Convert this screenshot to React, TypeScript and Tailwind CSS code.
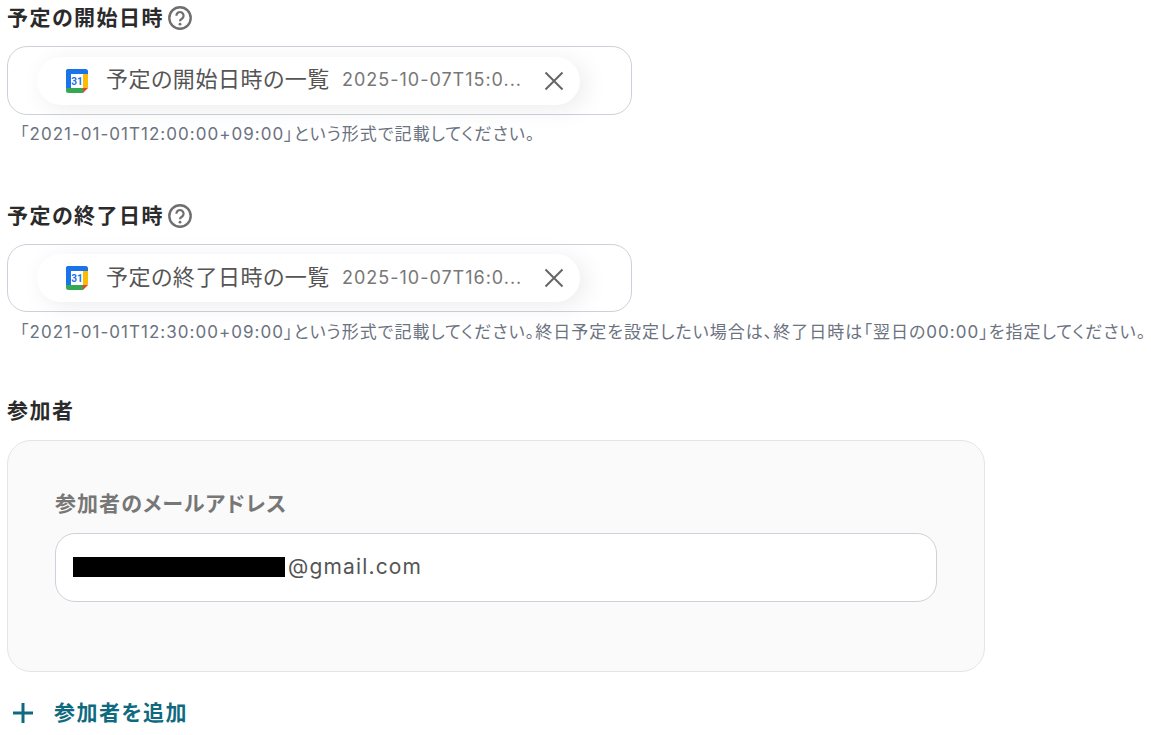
const font = "font-['Inter','Noto_Sans_CJK_JP',sans-serif] [font-feature-settings:'palt']";

const CalendarIcon = () => (
  <svg width="24" height="26" viewBox="0 0 24 26" className="shrink-0">
    <path d="M6 6h12v14H6z" fill="#fff" />
    <path d="M1 3.500A2.500 2.500 0 0 1 3.500 1H6v19H1z" fill="#1a73e8" />
    <path d="M3.500 1H20.500A2.500 2.500 0 0 1 23 3.500V6H1V3.500A2.500 2.500 0 0 1 3.500 1z" fill="#1a73e8" />
    <path d="M18 6h5v14h-5z" fill="#fbbc04" />
    <path d="M1 20h17v5H3.500A2.500 2.500 0 0 1 1 22.500z" fill="#34a853" />
    <path d="M18 20h5l-5 5z" fill="#ea4335" />
    <text x="12" y="16.500" textAnchor="middle" fontSize="10" fontWeight="700" fill="#1a73e8" fontFamily="Roboto, sans-serif">31</text>
  </svg>
);

const HelpIcon = () => (
  <svg width="24" height="24" viewBox="0 0 24 24" className="shrink-0" fill="none">
    <circle cx="12" cy="12" r="10.700" stroke="#6f6f6f" strokeWidth="2.400" />
    <path d="M8.400 9.700a3.600 3.600 0 1 1 5.500 3c-1.300.8-1.900 1.200-1.900 2.500" stroke="#6f6f6f" strokeWidth="2.200" />
    <circle cx="12" cy="18.200" r="1.400" fill="#6f6f6f" />
  </svg>
);

const Label = ({ text }: { text: string }) => (
  <div className="flex items-center gap-[4px] h-[24px]">
    <span className="pb-[2px] text-[21px] leading-none font-semibold tracking-[0.07em] text-[#2b2b2b]">{text}</span>
    <HelpIcon />
  </div>
);

const ChipField = ({ name, value, height }: { name: string; value: string; height: string }) => (
  <div className={`w-[625px] ${height} border border-[#ccd2da] rounded-[20px] flex items-center pl-[29px] bg-white`}>
    <div className="w-[543px] h-[48px] rounded-full bg-white shadow-[6px_4px_24px_rgba(0,0,0,0.08)] flex items-center pl-[28px]">
      <CalendarIcon />
      <span className="ml-[17px] pb-[2px] w-[222px] text-[22px] tracking-[0.025em] text-[#555555] whitespace-nowrap">{name}</span>
      <span className="ml-[14px] pb-[2px] w-[180px] text-[18px] tracking-[0.055em] text-[#777777] whitespace-nowrap">{value}</span>
      <svg width="22" height="22" viewBox="0 0 22 22" className="ml-[21px]" fill="none">
        <path d="M2.500 2.500l17 17M19.500 2.500l-17 17" stroke="#666666" strokeWidth="2" />
      </svg>
    </div>
  </div>
);

const Hint = ({ text }: { text: string }) => (
  <p className="mt-[9px] ml-[13px] text-[17px] leading-[20px] tracking-[0.06em] text-[#6b7280] whitespace-nowrap">{text}</p>
);

export default function App() {
  return (
    <div className={`${font} w-[1151px] h-[735px] overflow-hidden bg-white pl-[7px] pt-[6px]`}>
      <Label text="予定の開始日時" />
      <div className="mt-[16px]">
        <ChipField name="予定の開始日時の一覧" value="2025-10-07T15:0..." height="h-[69px]" />
      </div>
      <Hint text="「2021-01-01T12:00:00+09:00」という形式で記載してください。" />

      <div className="mt-[60px]">
        <Label text="予定の終了日時" />
      </div>
      <div className="mt-[16px]">
        <ChipField name="予定の終了日時の一覧" value="2025-10-07T16:0..." height="h-[68px]" />
      </div>
      <div className="pt-[1px]">
        <Hint text="「2021-01-01T12:30:00+09:00」という形式で記載してください。終日予定を設定したい場合は、終了日時は「翌日の00:00」を指定してください。" />
      </div>

      <div className="mt-[57px] h-[24px] flex items-center text-[21px] font-semibold tracking-[0.07em] text-[#2b2b2b]">参加者</div>

      <div className="mt-[17px] w-[978px] h-[232px] border border-[#e4e4e4] rounded-[24px] bg-[#fafafa] pl-[47px] pt-[48px]">
        <div className="h-[30px] flex items-center text-[21px] font-semibold tracking-[0.05em] text-[#777777]">参加者のメールアドレス</div>
        <div className="mt-[14px] w-[882px] h-[69px] border border-[#ccd2da] rounded-[20px] bg-white flex items-center pl-[17px]">
          <div className="relative pb-[2px] text-[21px] tracking-[0.055em] text-[#555555] pl-[215px]">
            <div className="absolute left-0 top-[6px] w-[212px] h-[20px] bg-black" />
            @gmail.com
          </div>
        </div>
      </div>

      <div className="mt-[26px] flex items-center h-[30px] pl-[6px]">
        <svg width="20" height="20" viewBox="0 0 20 20" fill="none">
          <path d="M10 0v20M0 10h20" stroke="#0f6a80" strokeWidth="3" />
        </svg>
        <span className="ml-[21px] text-[21px] font-semibold tracking-[0.07em] text-[#0f6a80]">参加者を追加</span>
      </div>
    </div>
  );
}
